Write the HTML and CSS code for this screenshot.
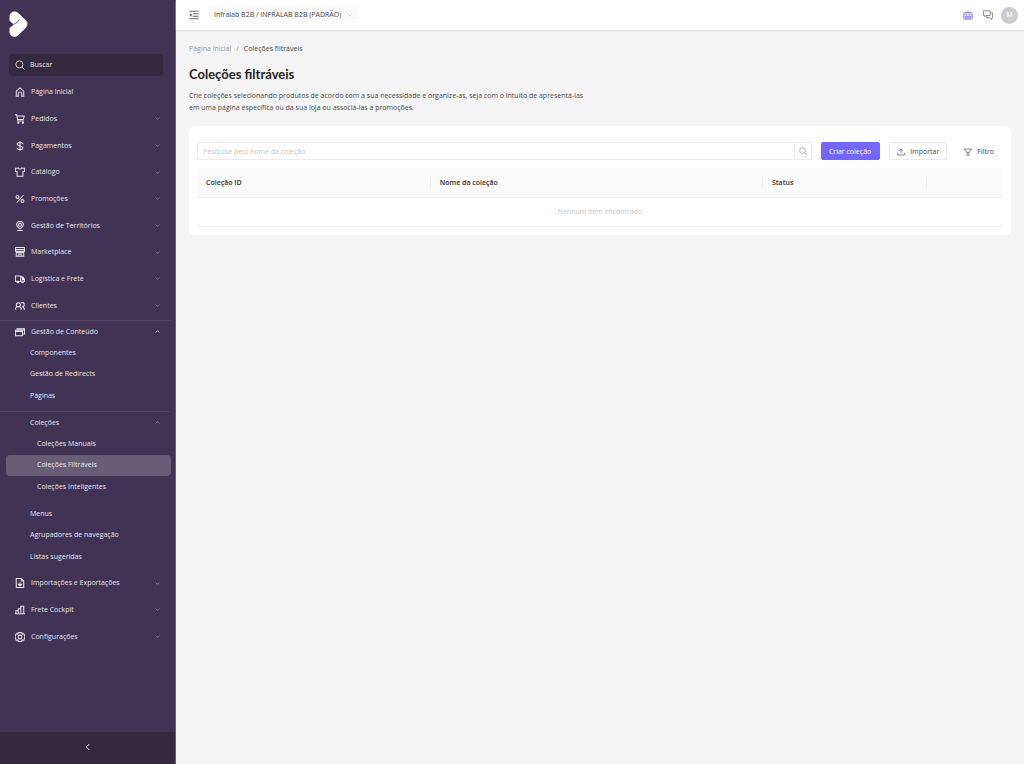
FILE: index.html
```html
<!DOCTYPE html>
<html lang="pt-BR">
<head>
<meta charset="utf-8">
<meta name="viewport" content="width=device-width, initial-scale=1">
<title>Coleções filtráveis</title>
<link rel="stylesheet" href="styles.css">
</head>
<body>
<svg class="sprite" aria-hidden="true">
  <symbol id="down" viewBox="0 0 24 24"><path d="M3 7l9 9 9-9"/></symbol>
  <symbol id="up" viewBox="0 0 24 24"><path d="M3 17l9-9 9 9"/></symbol>
  <symbol id="search" viewBox="0 0 24 24"><circle cx="10.500" cy="10.500" r="8.500"/><path d="M17 17l6 6"/></symbol>
</svg>
<div class="app">
  <aside class="sidebar">
    <a class="logo" href="#" aria-label="Início">
      <svg viewBox="0 0 19 27"><path d="M5.500 5.500l8 7.500-8 8z" fill="#fff" stroke="#fff" stroke-width="10" stroke-linecap="round" stroke-linejoin="round"/><path d="M0 9.500l5 4-5 4z" fill="#403353" stroke="none"/><path d="M5 13c2.500-.5 4-2 5-4.500" fill="none" stroke="#403353" stroke-width=".8"/></svg>
    </a>
    <button class="find" type="button"><svg class="icon"><use href="#search"/></svg>Buscar</button>
    <nav class="menu" aria-label="Principal">
      <ul class="group nine">
        <li><a class="item" href="#"><svg class="icon" viewBox="0 0 24 24"><path d="M3 10l9-8 9 8v12h-5v-6a4 4 0 0 0-8 0v6H3z"/></svg>Página inicial</a></li>
        <li><button class="item" type="button"><svg class="icon" viewBox="0 0 24 24"><path d="M0 2h4l3 15h14M5 5h17l-2 8H7"/><circle cx="8" cy="21" r="1.500"/><circle cx="19" cy="21" r="1.500"/></svg>Pedidos<svg class="chev"><use href="#down"/></svg></button></li>
        <li><button class="item" type="button"><svg class="icon" viewBox="0 0 24 24"><path d="M12 0v24M19 8c0-6-14-6-14 0 0 5 14 3 14 8 0 6-14 6-14 0"/></svg>Pagamentos<svg class="chev"><use href="#down"/></svg></button></li>
        <li><button class="item" type="button"><svg class="icon" viewBox="0 0 24 24"><path d="M8 2c1 4 7 4 8 0l3 1h4v8h-4v11H5V11H1V3h4z"/></svg>Catálogo<svg class="chev"><use href="#down"/></svg></button></li>
        <li><button class="item" type="button"><svg class="icon" viewBox="0 0 24 24"><circle cx="6" cy="7" r="3.500"/><circle cx="18" cy="17" r="3.500"/><path d="M20 3L4 21"/></svg>Promoções<svg class="chev"><use href="#down"/></svg></button></li>
        <li><button class="item" type="button"><svg class="icon" viewBox="0 0 24 24"><path d="M12 19c-5-3-8-6-8-10a8 8 0 0 1 16 0c0 4-3 7-8 10z"/><circle cx="12" cy="9" r="3.500"/><path d="M5 23h14"/></svg>Gestão de Territórios<svg class="chev"><use href="#down"/></svg></button></li>
        <li><button class="item" type="button"><svg class="icon" viewBox="0 0 24 24"><path d="M1 1h22v9H1zM1 6h22M3 10v12h18V10M3 14c4 0 4-3 4-4 0 5 5 5 5 0 0 5 5 5 5 0 0 1 0 4 4 4M9 22v-5h6v5"/></svg>Marketplace<svg class="chev"><use href="#down"/></svg></button></li>
        <li><button class="item" type="button"><svg class="icon" viewBox="0 0 24 24"><path d="M5 18H1V5h13v13H9M14 7h5l4 6v5h-3M16 18h-2M18 8v5h5"/><circle cx="7" cy="19" r="2"/><circle cx="18" cy="19" r="2"/></svg>Logística e Frete<svg class="chev"><use href="#down"/></svg></button></li>
        <li><button class="item" type="button"><svg class="icon" viewBox="0 0 24 24"><circle cx="8" cy="9" r="5"/><path d="M0 20c1-4 3-6 6-7M10 13c3 1 5 3 6 7M14 5c4-3 9 0 8 4 0 3-2 5-5 5 4 0 5 3 6 6M0 20h3M13 20h3M21 20h3"/></svg>Clientes<svg class="chev"><use href="#down"/></svg></button></li>
      </ul>
      <section class="block">
        <button class="item short" type="button" aria-expanded="true"><svg class="icon" viewBox="0 0 24 24"><path d="M1 8h17v13H1zM1 11h17M5 8V4h18v13h-5M6 7h17"/></svg>Gestão de Conteúdo<svg class="chev bright"><use href="#up"/></svg></button>
        <ul class="group subs">
          <li><a class="item sub" href="#">Componentes</a></li>
          <li><a class="item sub" href="#">Gestão de Redirects</a></li>
          <li><a class="item sub" href="#">Páginas</a></li>
        </ul>
      </section>
      <section class="block inner">
        <button class="item sub short" type="button" aria-expanded="true">Coleções<svg class="chev"><use href="#up"/></svg></button>
        <ul class="group subs">
          <li><a class="item deep" href="#">Coleções Manuais</a></li>
          <li><a class="item deep active" href="#" aria-current="page">Coleções Filtráveis</a></li>
          <li><a class="item deep" href="#">Coleções Inteligentes</a></li>
        </ul>
      </section>
      <ul class="group subs after">
        <li><a class="item sub" href="#">Menus</a></li>
        <li><a class="item sub" href="#">Agrupadores de navegação</a></li>
        <li><a class="item sub" href="#">Listas sugeridas</a></li>
      </ul>
      <ul class="group three">
        <li><button class="item" type="button"><svg class="icon" viewBox="0 0 24 24"><path d="M3 1h12l6 6v16H3zM15 1v6h6M12 10v8M8 15h8l-4 4z"/></svg>Importações e Exportações<svg class="chev"><use href="#down"/></svg></button></li>
        <li><button class="item" type="button"><svg class="icon" viewBox="0 0 24 24"><path d="M2 21v-7h6v7M8 21V9h6v12M14 21V3h7v18M0 21h24"/></svg>Frete Cockpit<svg class="chev"><use href="#down"/></svg></button></li>
        <li><button class="item" type="button"><svg class="icon" viewBox="0 0 24 24"><path d="M8 1h8l1 4 4-1 3 8-3 8-4-1-1 4H8l-1-4-4 1-3-8 3-8 4 1z"/><circle cx="12" cy="12" r="4.500"/></svg>Configurações<svg class="chev"><use href="#down"/></svg></button></li>
      </ul>
    </nav>
    <button class="collapse" type="button" aria-label="Recolher menu"><svg viewBox="0 0 24 24"><path d="M16 3l-9 9 9 9"/></svg></button>
  </aside>
  <div class="page">
    <header class="topbar">
      <button class="plain" type="button" aria-label="Alternar menu"><svg class="fold" viewBox="0 0 24 24"><path d="M1 3h22M9 9h14M9 15h14M1 21h22"/><path class="solid" d="M1 12l5-4v8z"/></svg></button>
      <div class="store">
        <select aria-label="Loja"><option>Infralab B2B / INFRALAB B2B (PADRÃO)</option></select>
        <svg class="arrow"><use href="#down"/></svg>
      </div>
      <div class="tools">
        <button class="plain bot" type="button" aria-label="Assistente"><svg viewBox="0 0 24 24"><rect x="2" y="6" width="20" height="16" rx="2"/><path d="M12 6V1M0 12v5M24 12v5M6 16v3h12v-3z"/><circle cx="8" cy="11" r="1"/><circle cx="16" cy="11" r="1"/></svg></button>
        <button class="plain chat" type="button" aria-label="Conversas"><svg viewBox="0 0 24 24"><path d="M1 2h16v11H7l-3 3v-3H1zM17 7h6v12h-2v4l-4-4H9v-6"/></svg></button>
        <button class="avatar" type="button">M</button>
      </div>
    </header>
    <main class="content">
      <nav class="crumbs" aria-label="Trilha"><a href="#">Página inicial</a><span class="sep">/</span><span class="here">Coleções filtráveis</span></nav>
      <h1>Coleções filtráveis</h1>
      <p class="lead">Crie coleções selecionando produtos de acordo com a sua necessidade e organize-as, seja com o intuito de apresentá-las<br>em uma página específica ou da sua loja ou associá-las a promoções.</p>
      <section class="card">
        <div class="actions">
          <form class="search">
            <input type="text" placeholder="Pesquise pelo nome da coleção" aria-label="Pesquise pelo nome da coleção">
            <button type="button" aria-label="Pesquisar"><svg><use href="#search"/></svg></button>
          </form>
          <button class="btn primary" type="button">Criar coleção</button>
          <button class="btn" type="button"><svg viewBox="0 0 24 24"><path d="M12 16V3M7 8l5-5 5 5M2 14v7h20v-7"/></svg>Importar</button>
          <button class="btn ghost" type="button"><svg viewBox="0 0 24 24"><path d="M2 3h20l-7 11v8H9v-8zM9 14h6"/></svg>Filtro</button>
        </div>
        <table>
          <thead><tr><th class="c-id" scope="col">Coleção ID</th><th scope="col">Nome da coleção</th><th class="c-status" scope="col">Status</th><td class="c-end"></td></tr></thead>
          <tbody><tr><td class="empty" colspan="4">Nenhum item encontrado</td></tr></tbody>
        </table>
      </section>
    </main>
  </div>
</div>
</body>
</html>
```
FILE: styles.css
```css
* { box-sizing: border-box; }
body { margin: 0; font-family: "Open Sans", "Noto Sans", sans-serif; font-size: 7px; line-height: 12px; color: #4a4a4a; background: #f4f4f4; }
button, input, select { font: inherit; color: inherit; margin: 0; padding: 0; border: 0; background: none; }
button { cursor: pointer; }
a { color: inherit; text-decoration: none; }
ul { list-style: none; margin: 0; padding: 0; }
svg { display: block; flex: none; fill: none; stroke: currentColor; stroke-width: 2; }
.sprite { position: absolute; width: 0; height: 0; }
.app { display: flex; min-height: 100vh; }

.sidebar { flex: none; display: flex; flex-direction: column; width: 176px; color: #e8e5ec; background: #403353; border-right: 1px solid #6b607c; }
.logo { margin: 11px 9px 16px; }
.logo svg { width: 19px; height: 27px; }
.find { display: flex; align-items: center; gap: 5px; height: 22px; margin: 0 12px 3px 9px; padding-left: 6px; border-radius: 4px; background: #332a40; }
.icon { width: 10px; height: 10px; }
.chev { width: 5px; height: 5px; margin-left: auto; color: #a9a1b5; stroke-width: 3; }
.bright { color: #fff; }
.menu { flex: 1; }
.menu .icon { stroke-width: 2.500; }
.group { display: grid; grid-auto-rows: 1fr; }
.nine { min-height: 240px; }
.three { min-height: 80px; margin-top: 2px; }
.subs { min-height: 65px; }
.after { margin-top: 5px; }
.item { display: flex; align-items: center; gap: 6px; width: 100%; height: 100%; padding: 0 15px; text-align: left; }
.short { height: 21px; }
.block { margin: 1px 3px 0 0; border-top: 1px solid #4c4060; }
.block .chev { margin-right: -3px; }
.inner { margin-top: 4px; }
.sub { padding-left: 30px; }
.deep { width: auto; margin: 0 1px 0 6px; padding-left: 31px; }
.active { border-radius: 4px; background: #675d76; }
.collapse { display: grid; place-items: center; height: 32px; padding-bottom: 2px; background: #332a40; }
.collapse svg { width: 8px; height: 8px; stroke-width: 3; }

.page { flex: 1; min-width: 0; }
.topbar { display: flex; align-items: center; gap: 9px; height: 30px; padding: 0 6px 0 13px; background: #fff; box-shadow: 0 1px 1px #e2e2e2; }
.fold { width: 10px; height: 10px; }
.solid { fill: currentColor; stroke: none; }
.store { position: relative; }
.store select { display: block; height: 16px; padding: 0 17px 0 6px; border-radius: 2px; background: #fafafa; appearance: none; }
.arrow { position: absolute; right: 6px; top: 5px; width: 6px; height: 6px; color: #bbb; pointer-events: none; }
.tools { display: flex; align-items: center; gap: 10px; margin-left: auto; }
.tools .plain svg { width: 10px; height: 10px; }
.bot { color: #8076f5; }
.bot rect { fill: #dedbff; }
.chat { color: #777; }
.avatar { width: 17px; height: 17px; margin-left: -2px; border-radius: 50%; font-weight: 600; color: #fff; background: #ccc; }

.content { padding: 13px 13px 0; }
.crumbs { display: flex; gap: 5px; color: #999; }
.here { color: #4a4a4a; }
h1 { margin: 11px 0 8px; font-family: Lato, sans-serif; font-size: 13px; line-height: 16px; font-weight: 700; color: #242424; }
.lead { margin: 0; }
.card { margin-top: 12px; padding: 16px 8px 8px; border-radius: 6px; background: #fff; }
.actions { display: flex; gap: 9px; margin-bottom: 8px; }
.search { flex: 1; display: flex; height: 18px; border: 1px solid #ebebeb; border-radius: 2px; }
.search input { flex: 1; min-width: 0; padding: 1px 5px 0; }
.search input::placeholder { color: #c4c4c4; opacity: 1; }
.search button { display: grid; place-items: center; width: 17px; border-left: 1px solid #ebebeb; color: #888; }
.search svg { width: 8px; height: 8px; }
.btn { display: flex; align-items: center; gap: 5px; height: 18px; padding: 1px 7px 0; border: 1px solid #e8e8e8; border-radius: 2px; }
.btn svg { width: 8px; height: 8px; }
.primary { padding: 1px 8px 0 7px; color: #fff; border-color: #7367ff; background: #7367ff; }
.ghost { padding-right: 8px; border-color: transparent; }
table { width: 100%; table-layout: fixed; border-collapse: collapse; }
thead tr { background: #fafafa; }
th { position: relative; height: 29px; padding: 2px 9px 0; text-align: left; font-weight: 600; color: #333; }
th::after { content: ""; position: absolute; right: 0; top: 9px; width: 1px; height: 12px; background: #efefef; }
.c-id { width: 29%; }
.c-status { width: 164px; }
.c-end { width: 76px; }
.empty { height: 29px; padding: 1px 0 0; text-align: center; color: #c4c4c4; border-top: 1px solid #f2f2f2; border-bottom: 1px solid #f2f2f2; }
```
